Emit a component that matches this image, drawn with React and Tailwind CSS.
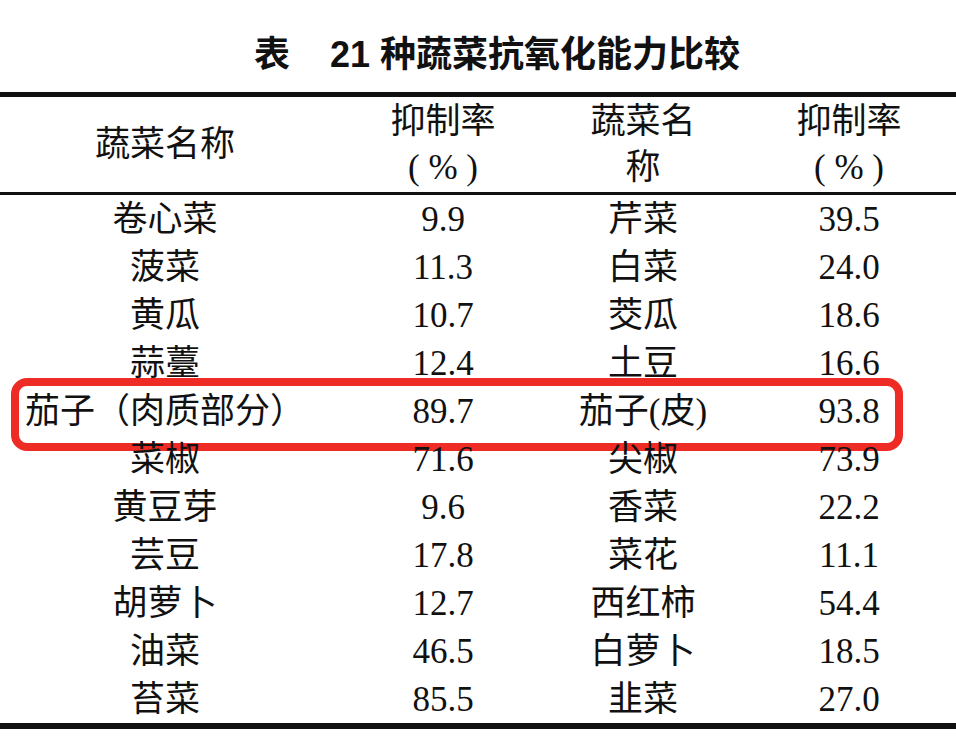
import React from 'react';

const rows = [
  ['卷心菜', '9.9', '芹菜', '39.5'],
  ['菠菜', '11.3', '白菜', '24.0'],
  ['黄瓜', '10.7', '茭瓜', '18.6'],
  ['蒜薹', '12.4', '土豆', '16.6'],
  ['茄子（肉质部分）', '89.7', '茄子(皮)', '93.8', true],
  ['菜椒', '71.6', '尖椒', '73.9'],
  ['黄豆芽', '9.6', '香菜', '22.2'],
  ['芸豆', '17.8', '菜花', '11.1'],
  ['胡萝卜', '12.7', '西红柿', '54.4'],
  ['油菜', '46.5', '白萝卜', '18.5'],
  ['苔菜', '85.5', '韭菜', '27.0'],
];

const serif = "font-['Liberation_Serif','Noto_Sans_CJK_SC',serif]";

function Row({ cells, marked }) {
  return (
    <div className="relative grid h-[48px] grid-cols-[330px_226px_174px_1fr] items-center text-center">
      <div>{cells[0]}</div>
      <div>{cells[1]}</div>
      <div>{cells[2]}</div>
      <div className="pl-[12px]">{cells[3]}</div>
      {/* red highlight frame over the eggplant row */}
      {marked && (
        <div className="pointer-events-none absolute left-[11px] right-[53px] -top-[9px] -bottom-[16px] rounded-[16px] border-[8px] border-[#ee2b25]" />
      )}
    </div>
  );
}

export default function App() {
  return (
    <div className={`h-[740px] w-[956px] bg-white text-[#111] ${serif}`}>
      <h1 className="flex h-[92px] items-center justify-center pl-[38px] pt-[24px] pb-[6px] font-['Liberation_Sans','Noto_Sans_CJK_SC',sans-serif] text-[36px] font-bold">
        <span>表</span>
        <span className="ml-[40px]">21 种蔬菜抗氧化能力比较</span>
      </h1>

      <div className="h-[5px] bg-[#111]" />

      <div className="grid h-[95px] grid-cols-[330px_226px_174px_1fr] items-center text-center text-[35px] leading-[46px]">
        <div>蔬菜名称</div>
        <div>
          <div>抑制率</div>
          <div className="whitespace-pre">( % )</div>
        </div>
        <div>
          <div>蔬菜名</div>
          <div>称</div>
        </div>
        <div className="pl-[12px]">
          <div>抑制率</div>
          <div className="whitespace-pre">( % )</div>
        </div>
      </div>

      <div className="h-[3px] bg-[#111]" />

      <div className="text-[35px] leading-none">
        {rows.map((r, i) => (
          <Row key={i} cells={r} marked={r[4]} />
        ))}
      </div>

      <div className="h-[6px] bg-[#111]" />
    </div>
  );
}
